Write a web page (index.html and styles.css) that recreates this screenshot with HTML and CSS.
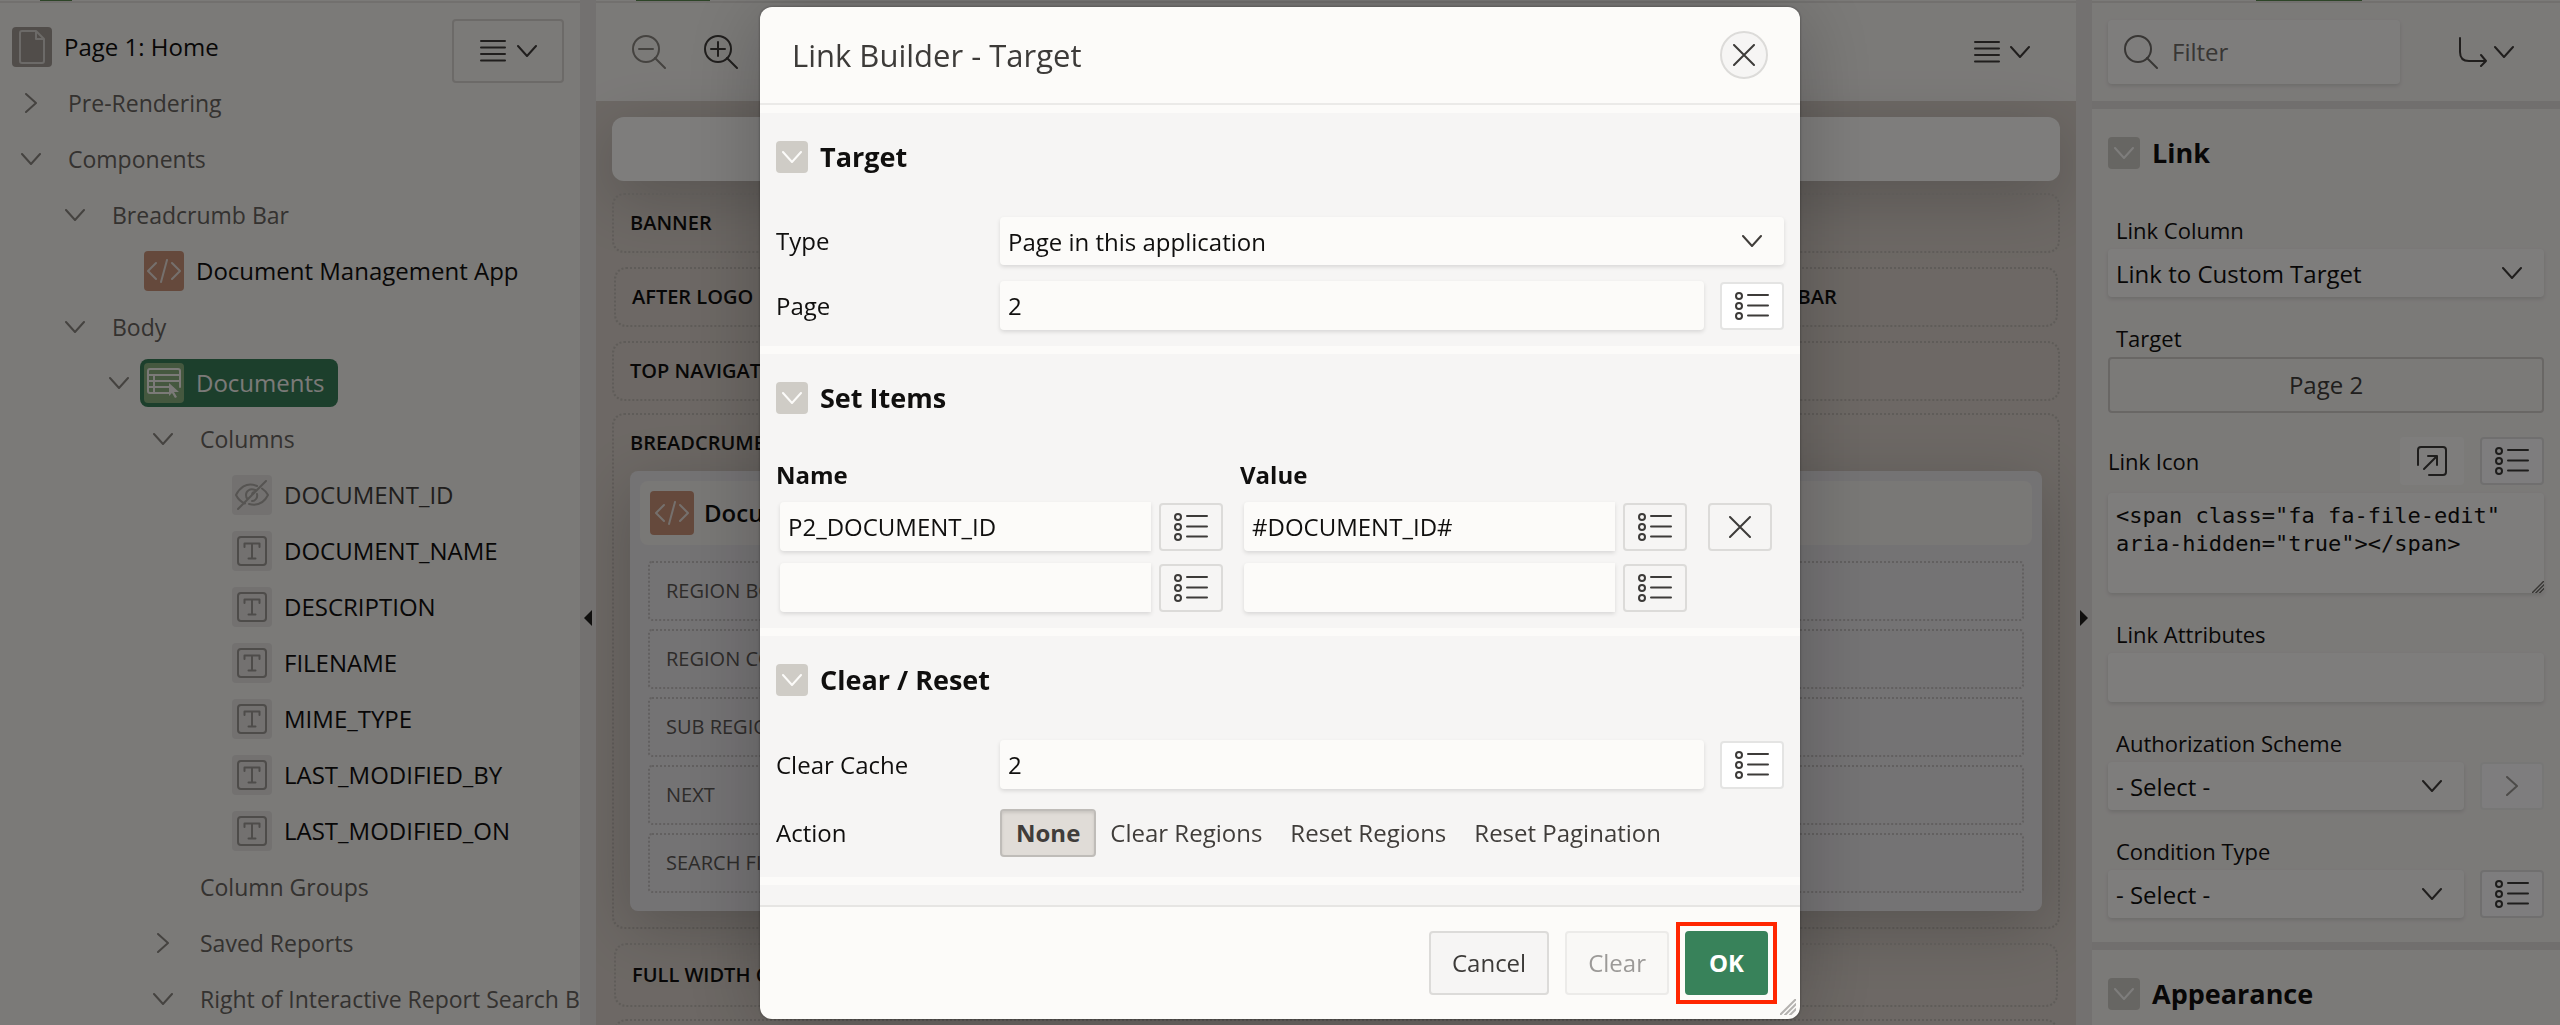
FILE: index.html
```html
<!DOCTYPE html>
<html lang="en">
<head>
<meta charset="utf-8">
<meta name="viewport" content="width=device-width, initial-scale=1">
<title>Page Designer</title>
<link rel="stylesheet" href="styles.css">
</head>
<body>
<svg class="sprite" aria-hidden="true">
  <symbol id="down" viewBox="0 0 20 12"><path d="M1 1l9 10 9-10"/></symbol>
  <symbol id="right" viewBox="0 0 12 20"><path d="M1 1l10 9-10 9"/></symbol>
  <symbol id="lines" viewBox="0 0 26 22"><path d="M1 1h24M1 7.500h24M1 14h24M1 20.500h24"/></symbol>
  <symbol id="list" viewBox="0 0 34 28"><circle cx="4" cy="4" r="3"/><circle cx="4" cy="14" r="3"/><circle cx="4" cy="24" r="3"/><path d="M13 3h20M13 13.500h20M13 23.500h20"/></symbol>
  <symbol id="close" viewBox="0 0 22 22"><path d="M1 1l20 20M21 1L1 21"/></symbol>
  <symbol id="code" viewBox="0 0 34 24"><path d="M9 4L1 12l8 8M25 4l8 8-8 8M20 1l-6 22"/></symbol>
  <symbol id="text" viewBox="0 0 30 30"><rect x="1" y="1" width="28" height="28" rx="3"/><path d="M7.500 11V7.500h15V11M15 7.500v15M11.500 22.500h7"/></symbol>
  <symbol id="hidden" viewBox="0 0 34 30"><path d="M22 6C11 1 4 9 1 15c2 4 5 7 9 8.500M27 8.500c3 2 5 4.500 6 6.500-4 8-11 11-19 9M20 10c-5-2-9 1-9 5 0 2 .5 3 1.500 4M17 15c0-2 1-3 3-3M22 14c1 4-2 7-5 7M31 1L3 29"/></symbol>
  <symbol id="doc" viewBox="0 0 26 34"><path d="M3 1h14l8 8v22a2 2 0 0 1-2 2H3a2 2 0 0 1-2-2V3a2 2 0 0 1 2-2zM17 1v8h8"/></symbol>
  <symbol id="report" viewBox="0 0 34 30"><path d="M22 25H3a2 2 0 0 1-2-2V3a2 2 0 0 1 2-2h28a2 2 0 0 1 2 2v16M1 7h32M1 13h32M1 19h21M7 7v18"/><path class="solid" d="M22 15v13l3-3 3 5 2-1-3-5h5z"/></symbol>
  <symbol id="search" viewBox="0 0 34 34"><circle cx="14" cy="14" r="13"/><path d="M23 23l10 10"/></symbol>
  <symbol id="zoom-out" viewBox="0 0 34 34"><circle cx="14" cy="14" r="13"/><path d="M23 23l10 10M7 14h14"/></symbol>
  <symbol id="zoom-in" viewBox="0 0 34 34"><circle cx="14" cy="14" r="13"/><path d="M23 23l10 10M7 14h14M14 7v14"/></symbol>
  <symbol id="goto" viewBox="0 0 30 30"><path d="M2 1v14c0 6 3 9 9 9h17M23 18l5 6-5 5"/></symbol>
  <symbol id="popout" viewBox="0 0 30 30"><path d="M1 19V4a3 3 0 0 1 3-3h22a3 3 0 0 1 3 3v22a3 3 0 0 1-3 3H12M7 23L20 10M11 10h9v9"/></symbol>
  <symbol id="grip" viewBox="0 0 16 16"><path d="M0 16L16 0M5 16L16 5M10 16l6-6"/></symbol>
</svg>

<div class="designer">
  <nav class="panel tree-panel" aria-label="Rendering">
    <div class="tabs"><span class="tab-mark"></span></div>
    <ul class="tree">
      <li><div class="row root"><span class="node"><span class="tile tile-page"><svg class="i-doc"><use href="#doc"/></svg></span>Page 1: Home</span></div>
        <ul class="first">
          <li><div class="row muted"><span class="toggle"><svg class="i-right"><use href="#right"/></svg></span><span class="label">Pre-Rendering</span></div></li>
          <li><div class="row muted"><span class="toggle"><svg class="i-down"><use href="#down"/></svg></span><span class="label">Components</span></div>
            <ul>
              <li><div class="row muted"><span class="toggle"><svg class="i-down"><use href="#down"/></svg></span><span class="label">Breadcrumb Bar</span></div>
                <ul>
                  <li><div class="row"><span class="toggle"></span><span class="node"><span class="tile tile-code"><svg class="i-code"><use href="#code"/></svg></span>Document Management App</span></div></li>
                </ul>
              </li>
              <li><div class="row muted"><span class="toggle"><svg class="i-down"><use href="#down"/></svg></span><span class="label">Body</span></div>
                <ul>
                  <li><div class="row"><span class="toggle"><svg class="i-down"><use href="#down"/></svg></span><span class="node selected"><span class="tile tile-report"><svg class="i-report"><use href="#report"/></svg></span>Documents</span></div>
                    <ul>
                      <li><div class="row muted"><span class="toggle"><svg class="i-down"><use href="#down"/></svg></span><span class="label">Columns</span></div>
                        <ul>
                          <li><div class="row dim"><span class="toggle"></span><span class="node"><span class="tile"><svg class="i-hidden"><use href="#hidden"/></svg></span>DOCUMENT_ID</span></div></li>
                          <li><div class="row"><span class="toggle"></span><span class="node"><span class="tile tile-text"><svg class="i-text"><use href="#text"/></svg></span>DOCUMENT_NAME</span></div></li>
                          <li><div class="row"><span class="toggle"></span><span class="node"><span class="tile tile-text"><svg class="i-text"><use href="#text"/></svg></span>DESCRIPTION</span></div></li>
                          <li><div class="row"><span class="toggle"></span><span class="node"><span class="tile tile-text"><svg class="i-text"><use href="#text"/></svg></span>FILENAME</span></div></li>
                          <li><div class="row"><span class="toggle"></span><span class="node"><span class="tile tile-text"><svg class="i-text"><use href="#text"/></svg></span>MIME_TYPE</span></div></li>
                          <li><div class="row"><span class="toggle"></span><span class="node"><span class="tile tile-text"><svg class="i-text"><use href="#text"/></svg></span>LAST_MODIFIED_BY</span></div></li>
                          <li><div class="row"><span class="toggle"></span><span class="node"><span class="tile tile-text"><svg class="i-text"><use href="#text"/></svg></span>LAST_MODIFIED_ON</span></div></li>
                        </ul>
                      </li>
                      <li><div class="row muted"><span class="toggle"></span><span class="label">Column Groups</span></div></li>
                      <li><div class="row muted"><span class="toggle"><svg class="i-right"><use href="#right"/></svg></span><span class="label">Saved Reports</span></div></li>
                      <li><div class="row muted"><span class="toggle"><svg class="i-down"><use href="#down"/></svg></span><span class="label">Right of Interactive Report Search Bar</span></div></li>
                    </ul>
                  </li>
                </ul>
              </li>
            </ul>
          </li>
        </ul>
      </li>
    </ul>
    <button class="menu-button tree-menu" type="button" aria-label="Tree menu"><svg class="i-lines"><use href="#lines"/></svg><svg class="i-down"><use href="#down"/></svg></button>
  </nav>

  <div class="splitter"><span class="arrow arrow-left"></span></div>

  <main class="panel layout-panel">
    <div class="tabs"><span class="tab-mark"></span></div>
    <div class="toolbar">
      <button class="tool faded" type="button" aria-label="Zoom out"><svg class="i-zoom"><use href="#zoom-out"/></svg></button>
      <button class="tool" type="button" aria-label="Zoom in"><svg class="i-zoom"><use href="#zoom-in"/></svg></button>
      <button class="tool tool-menu" type="button" aria-label="Layout menu"><svg class="i-lines"><use href="#lines"/></svg><svg class="i-down"><use href="#down"/></svg></button>
    </div>
    <div class="canvas">
      <div class="blank"></div>
      <div class="slot">BANNER</div>
      <div class="slot-row"><div class="slot">AFTER LOGO</div><div class="slot">BEFORE NAVIGATION BAR</div><div class="slot">AFTER NAVIGATION BAR</div></div>
      <div class="slot">TOP NAVIGATION</div>
      <section class="region">
        <h3 class="region-name">BREADCRUMB BAR</h3>
        <div class="card">
          <div class="card-head"><span class="tile tile-code tile-large"><svg class="i-code"><use href="#code"/></svg></span>Document Management App</div>
          <div class="sub-slots">
            <div class="sub-slot">REGION BODY</div>
            <div class="sub-slot">REGION CONTENT</div>
            <div class="sub-slot">SUB REGIONS</div>
            <div class="sub-slot">NEXT</div>
            <div class="sub-slot">SEARCH FIELD</div>
          </div>
        </div>
      </section>
      <div class="slot-row slot-row-full"><div class="slot">FULL WIDTH CONTENT</div></div>
      <div class="slot-row slot-row-last"><div class="slot"></div></div>
    </div>
  </main>

  <div class="splitter"><span class="arrow arrow-right"></span></div>

  <aside class="panel property-panel" aria-label="Properties">
    <div class="tabs"><span class="tab-mark"></span></div>
    <div class="filter-bar">
      <div class="filter"><svg class="i-zoom"><use href="#search"/></svg><input type="text" placeholder="Filter" aria-label="Filter"></div>
      <button class="tool tool-goto" type="button" aria-label="Go to group"><svg class="i-goto"><use href="#goto"/></svg><svg class="i-down"><use href="#down"/></svg></button>
    </div>
    <section class="group">
      <h2 class="group-head"><button class="collapse" type="button" aria-label="Collapse Link"><svg class="i-down"><use href="#down"/></svg></button>Link</h2>
      <div class="field">
        <label for="link-column">Link Column</label>
        <div class="select"><select id="link-column"><option>Link to Custom Target</option></select><svg class="i-down"><use href="#down"/></svg></div>
      </div>
      <div class="field">
        <label for="target">Target</label>
        <button class="target-button" id="target" type="button">Page 2</button>
      </div>
      <div class="field">
        <div class="field-head">
          <label for="link-icon">Link Icon</label>
          <button class="icon-button plain" type="button" aria-label="Open editor"><svg class="i-popout"><use href="#popout"/></svg></button>
          <button class="icon-button white" type="button" aria-label="Pick icon"><svg class="i-list"><use href="#list"/></svg></button>
        </div>
        <div class="area"><textarea id="link-icon" rows="3">&lt;span class="fa fa-file-edit" aria-hidden="true"&gt;&lt;/span&gt;</textarea><svg class="grip"><use href="#grip"/></svg></div>
      </div>
      <div class="field">
        <label for="link-attributes">Link Attributes</label>
        <input class="text" id="link-attributes" type="text">
      </div>
      <div class="field">
        <label for="authorization">Authorization Scheme</label>
        <div class="field-line">
          <div class="select"><select id="authorization"><option>- Select -</option></select><svg class="i-down"><use href="#down"/></svg></div>
          <button class="icon-button white off" type="button" disabled aria-label="Go to scheme"><svg class="i-right"><use href="#right"/></svg></button>
        </div>
      </div>
      <div class="field">
        <label for="condition">Condition Type</label>
        <div class="field-line">
          <div class="select"><select id="condition"><option>- Select -</option></select><svg class="i-down"><use href="#down"/></svg></div>
          <button class="icon-button white" type="button" aria-label="Pick condition"><svg class="i-list"><use href="#list"/></svg></button>
        </div>
      </div>
    </section>
    <section class="group">
      <h2 class="group-head"><button class="collapse" type="button" aria-label="Collapse Appearance"><svg class="i-down"><use href="#down"/></svg></button>Appearance</h2>
    </section>
  </aside>
</div>

<div class="overlay">
  <div class="dialog" role="dialog" aria-modal="true" aria-labelledby="dialog-title">
    <header class="dialog-head">
      <h1 id="dialog-title">Link Builder - Target</h1>
      <button class="dialog-close" type="button" aria-label="Close"><svg class="i-close"><use href="#close"/></svg></button>
    </header>
    <div class="dialog-body">
      <section class="section">
        <h2 class="group-head"><button class="collapse" type="button" aria-label="Collapse Target"><svg class="i-down"><use href="#down"/></svg></button>Target</h2>
        <div class="form">
          <div class="form-row">
            <label for="type">Type</label>
            <div class="select"><select id="type"><option>Page in this application</option></select><svg class="i-down"><use href="#down"/></svg></div>
          </div>
          <div class="form-row">
            <label for="page">Page</label>
            <div class="field-line"><input class="text" id="page" type="text" value="2"><button class="icon-button white" type="button" aria-label="Pick page"><svg class="i-list"><use href="#list"/></svg></button></div>
          </div>
        </div>
      </section>
      <section class="section">
        <h2 class="group-head"><button class="collapse" type="button" aria-label="Collapse Set Items"><svg class="i-down"><use href="#down"/></svg></button>Set Items</h2>
        <table class="items">
          <thead><tr><th scope="col">Name</th><th scope="col">Value</th><td></td></tr></thead>
          <tbody>
            <tr>
              <td><div class="item"><input class="text" type="text" value="P2_DOCUMENT_ID" aria-label="Name 1"><button class="icon-button" type="button" aria-label="Pick name 1"><svg class="i-list"><use href="#list"/></svg></button></div></td>
              <td><div class="item"><input class="text" type="text" value="#DOCUMENT_ID#" aria-label="Value 1"><button class="icon-button" type="button" aria-label="Pick value 1"><svg class="i-list"><use href="#list"/></svg></button></div></td>
              <td><div class="item"><button class="icon-button" type="button" aria-label="Remove row"><svg class="i-close"><use href="#close"/></svg></button></div></td>
            </tr>
            <tr>
              <td><div class="item"><input class="text" type="text" aria-label="Name 2"><button class="icon-button" type="button" aria-label="Pick name 2"><svg class="i-list"><use href="#list"/></svg></button></div></td>
              <td><div class="item"><input class="text" type="text" aria-label="Value 2"><button class="icon-button" type="button" aria-label="Pick value 2"><svg class="i-list"><use href="#list"/></svg></button></div></td>
              <td></td>
            </tr>
          </tbody>
        </table>
      </section>
      <section class="section">
        <h2 class="group-head"><button class="collapse" type="button" aria-label="Collapse Clear / Reset"><svg class="i-down"><use href="#down"/></svg></button>Clear / Reset</h2>
        <div class="form">
          <div class="form-row">
            <label for="cache">Clear Cache</label>
            <div class="field-line"><input class="text" id="cache" type="text" value="2"><button class="icon-button white" type="button" aria-label="Pick pages"><svg class="i-list"><use href="#list"/></svg></button></div>
          </div>
          <div class="form-row" role="radiogroup" aria-labelledby="action-label">
            <span id="action-label">Action</span>
            <div class="pills">
              <label class="pill"><input type="radio" name="action" checked><span>None</span></label>
              <label class="pill"><input type="radio" name="action"><span>Clear Regions</span></label>
              <label class="pill"><input type="radio" name="action"><span>Reset Regions</span></label>
              <label class="pill"><input type="radio" name="action"><span>Reset Pagination</span></label>
            </div>
          </div>
        </div>
      </section>
      <section class="section section-rest"></section>
    </div>
    <footer class="dialog-foot">
      <button class="button" type="button">Cancel</button>
      <button class="button" type="button" disabled>Clear</button>
      <button class="button primary" type="button">OK</button>
    </footer>
    <svg class="grip"><use href="#grip"/></svg>
  </div>
</div>
</body>
</html>
```

FILE: styles.css
```css
* { box-sizing: border-box; }

body {
  margin: 0;
  height: 100vh;
  overflow: hidden;
  color: #100f0e;
  font: 24px/32px "Open Sans", "Noto Sans", sans-serif;
}

button, input, select, textarea { font: inherit; color: inherit; margin: 0; }
button { cursor: pointer; padding: 0; background: none; border: 0; }
h1, h2, h3, ul { margin: 0; padding: 0; }
ul { list-style: none; }

.sprite { position: absolute; width: 0; height: 0; }
svg { display: block; flex: none; fill: none; stroke: currentColor; stroke-width: 2; stroke-linecap: round; stroke-linejoin: round; }
.solid { fill: currentColor; stroke: none; }
.i-down { width: 20px; height: 12px; }
.i-right { width: 12px; height: 20px; }
.i-lines { width: 26px; height: 22px; }
.i-list { width: 34px; height: 28px; }
.i-close { width: 22px; height: 22px; }
.i-code { width: 34px; height: 24px; }
.i-text { width: 30px; height: 30px; }
.i-hidden { width: 34px; height: 30px; }
.i-doc { width: 26px; height: 34px; }
.i-report { width: 34px; height: 30px; }
.i-zoom { width: 34px; height: 34px; }
.i-goto, .i-popout { width: 30px; height: 30px; }

/* Designer shell */
.designer {
  display: grid;
  grid-template-columns: 580px 16px minmax(0, 1fr) 16px 468px;
  height: 100%;
}
.panel { position: relative; overflow: hidden; min-width: 0; background: #f7f4f1; }
.tabs { height: 3px; padding-left: 40px; border-bottom: 2px solid #e4e1dd; }
.tab-mark { display: block; width: 32px; height: 1px; background: #5c8a50; }
.layout-panel .tab-mark { width: 74px; }
.property-panel .tabs { padding-left: 164px; }
.property-panel .tab-mark { width: 106px; }

.splitter { display: flex; align-items: center; justify-content: center; padding-top: 211px; background: #e6e3e0; }
.arrow { border: 8px solid transparent; border-width: 8px 0; }
.arrow-left { border-right: 8px solid #201e1c; }
.arrow-right { border-left: 8px solid #201e1c; }

/* Tree */
.tree { padding-top: 16px; }
.tree ul { padding-left: 44px; }
.tree ul.first { padding-left: 12px; }
.row { display: flex; align-items: center; height: 56px; white-space: nowrap; }
.root { padding-left: 12px; }
.toggle { display: flex; justify-content: center; width: 38px; margin-right: 6px; flex: none; color: #8a8680; }
.node { display: flex; align-items: center; gap: 12px; height: 48px; }
.label { padding-left: 12px; font-size: 23px; }
.muted { color: #686460; }
.dim { color: #403d3a; }
.selected { margin-left: -4px; padding: 0 14px 0 4px; border-radius: 8px; color: #f7f4f1; background: #387e58; }
.tile { display: flex; align-items: center; justify-content: center; width: 40px; height: 40px; border-radius: 4px; color: #aca8a4; background: #e6e3e0; }
.tile-text { color: #9c9894; }
.tile-page { color: #d8d4d0; background: #a39b95; }
.tile-code { color: #eae0da; background: #cb9378; }
.tile-report { color: #f7f4f1; background: #8bb07e; }
.tile-large { width: 44px; height: 44px; }

.menu-button { display: flex; align-items: center; justify-content: center; gap: 11px; width: 112px; height: 64px; border: 2px solid #d8d4d0; border-radius: 4px; color: #403d3a; }
.tree-menu { position: absolute; top: 19px; right: 16px; background: #f7f4f1; }

/* Layout canvas */
.toolbar { display: flex; align-items: center; gap: 38px; height: 98px; padding: 0 46px 0 36px; color: #403d3a; }
.tool { display: flex; align-items: center; gap: 10px; }
.faded { color: #8a8680; }
.tool-menu { margin-left: auto; }
.canvas { height: 100%; padding: 16px; background: #dad1ca; }
.blank { height: 64px; margin-bottom: 12px; border-radius: 12px; background: #fcfbf9; box-shadow: 0 16px 64px rgba(0, 0, 0, .2); }
.slot { min-height: 60px; margin-bottom: 12px; padding: 12px 16px; border: 2px dotted #bfb8b2; border-radius: 12px; font-size: 20px; font-weight: 600; }
.slot-row { display: grid; grid-auto-flow: column; grid-auto-columns: minmax(0, 1fr); gap: 14px; padding: 2px 2px; }
.slot-row-full .slot { min-height: 64px; padding: 14px 16px; }
.slot-row-full, .slot-row-last { padding-bottom: 0; }
.slot-row-last { padding-top: 0; }
.region { min-height: 516px; margin-bottom: 12px; padding: 12px 16px 16px; border: 2px dotted #bfb8b2; border-radius: 12px; }
.region-name { margin-bottom: 12px; font-size: 20px; font-weight: 600; }
.card { padding: 10px 10px 18px; border-radius: 8px; background: #e9e6e9; box-shadow: 0 16px 64px rgba(0, 0, 0, .2); }
.card-head { display: flex; align-items: center; gap: 10px; height: 64px; padding: 0 10px; border-radius: 8px; font-weight: 600; background: #f3f0ed; }
.sub-slots { display: grid; gap: 8px; padding: 16px 8px 0; }
.sub-slot { padding: 12px 16px; border: 2px dotted #c4c0c0; border-radius: 4px; color: #5c5855; font-size: 20px; }

/* Properties */
.filter-bar { display: flex; align-items: center; justify-content: space-between; height: 98px; padding: 0 46px 0 16px; color: #403d3a; }
.filter { display: flex; align-items: center; gap: 14px; width: 292px; height: 64px; padding-left: 16px; border-radius: 4px; background: #fcfbf9; box-shadow: 0 2px 4px rgba(0, 0, 0, .12); color: #706c68; }
.filter input { flex: 1; min-width: 0; padding: 0; border: 0; outline: 0; background: none; }
.filter input::placeholder { color: #706c68; opacity: 1; }
.tool-goto { gap: 6px; }
.group { padding: 28px 16px 24px; border-top: 8px solid #e2dfdc; }
.group-head { display: flex; align-items: center; gap: 12px; height: 32px; margin-bottom: 44px; font-size: 27px; font-weight: 700; }
.collapse { display: flex; align-items: center; justify-content: center; width: 32px; height: 32px; border-radius: 4px; color: #fcfbf9; background: #cfccc6; }
.group .group-head { margin-bottom: 20px; }
.field { padding-top: 24px; }
.field > label { display: block; padding: 0 8px 2px; font-size: 22px; line-height: 34px; }
.field-head { display: flex; align-items: center; gap: 16px; margin-bottom: 8px; }
.field-head label { margin-right: auto; font-size: 22px; }
.field-line { display: flex; align-items: flex-end; gap: 16px; }
.text, .select select, .area textarea {
  display: block; width: 100%; min-width: 0; border: 0; border-radius: 4px; outline: 0;
  background: #fcfbf9; box-shadow: 0 2px 4px rgba(0, 0, 0, .12);
}
.text { height: 49px; padding: 0 8px; }
.select { position: relative; flex: 1; min-width: 0; }
.select select { appearance: none; height: 48px; padding: 2px 8px 0; }
.select svg { position: absolute; top: 18px; right: 22px; pointer-events: none; color: #403d3a; }
.target-button { width: 100%; height: 56px; border: 2px solid #d2cecb; border-radius: 4px; color: #403d3a; }
.icon-button { display: flex; flex: none; align-items: center; justify-content: center; width: 64px; height: 48px; border: 2px solid #dcdbd9; border-radius: 4px; color: #3d3b39; background: #f6f5f4; }
.icon-button.white { border-color: #e4e4e3; background: #fff; }
.property-panel .icon-button.white { border-color: #e0dfde; background: #fcfbfc; }
.icon-button.plain { border: 0; background: #fcfbf9; }
.property-panel .icon-button.off { border-color: #efeeed; color: #9a9692; }
.area { position: relative; }
.area textarea { height: 100px; padding: 9px 8px; resize: none; font: 22px/28px "DejaVu Sans Mono", "Liberation Mono", monospace; overflow: hidden; }
.grip { position: absolute; right: 0; bottom: 0; width: 12px; height: 12px; color: #706c68; }

/* Dialog */
.overlay { position: fixed; inset: 0; display: flex; justify-content: center; padding: 7px 16px 6px; background: rgba(0, 0, 0, .5); }
.dialog { position: relative; display: flex; flex-direction: column; width: 1040px; overflow: hidden; border-radius: 12px; background: #fcfbf9; box-shadow: 0 8px 80px rgba(0, 0, 0, .24), 0 0 3px rgba(0, 0, 0, .4); }
.dialog-head { display: flex; align-items: center; justify-content: space-between; flex: none; padding: 24px 32px; border-bottom: 2px solid #ebeae8; }
.dialog-head h1 { color: #3d3b39; font-size: 31px; font-weight: 400; line-height: 48px; }
.dialog-close { display: flex; align-items: center; justify-content: center; width: 48px; height: 48px; border: 2px solid #dcdbd9; border-radius: 50%; color: #3d3b39; background: #f6f5f4; }
.dialog-body { display: flex; flex-direction: column; gap: 8px; flex: 1; min-height: 0; padding-top: 8px; overflow: hidden; }
.section { flex: none; padding: 28px 16px 16px; background: #f6f5f4; }
.section-rest { flex: 1; padding: 0; }
.form { display: grid; gap: 16px; }
.form-row { display: grid; grid-template-columns: 224px minmax(0, 1fr); align-items: center; }

.items { width: 100%; border-collapse: collapse; table-layout: fixed; margin-bottom: -4px; }
.items th, .items thead td { height: 36px; padding: 0 0 2px; text-align: left; font-weight: 700; }
.items th { width: 464px; }
.items tbody td { padding: 8px 0 4px 4px; }
.item { display: flex; align-items: flex-end; gap: 8px; padding-right: 17px; }
.item .text { border-radius: 4px 0 0 4px; }

.pills { display: flex; padding: 4px 0; }
.pill { position: relative; cursor: pointer; }
.pill input { position: absolute; inset: 0; margin: 0; opacity: 0; }
.pill span { display: block; padding: 0 14px; line-height: 48px; color: #403d3a; border-radius: 4px; }
.pill input:checked + span { border: 2px solid #bfbcb8; line-height: 44px; font-weight: 700; background: #e0dcd7; box-shadow: inset 0 2px 3px rgba(0, 0, 0, .1); }

.dialog-foot { display: flex; flex: none; justify-content: flex-end; gap: 16px; padding: 24px 32px; border-top: 2px solid #e6e5e3; }
.button { height: 64px; padding: 0 21px; border: 2px solid #dcdbd9; border-radius: 4px; color: #3d3b39; background: #f6f5f4; }
.button:disabled { border-color: #ecebe9; color: #9c9a98; background: #f9f8f6; }
.primary { position: relative; padding: 0 22px; border-color: #38825a; color: #fff; font-weight: 700; background: #38825a; }
.primary::after { content: ""; position: absolute; inset: -11px; border: 4px solid #ff2600; }
.dialog > .grip { right: 4px; bottom: 4px; width: 16px; height: 16px; color: #b4b2b0; }
```
